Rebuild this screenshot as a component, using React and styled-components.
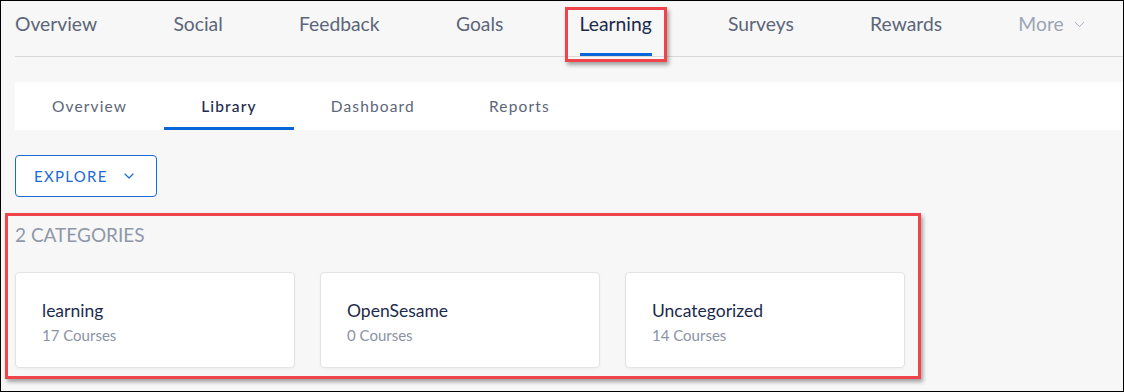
import React from 'react'
import styled, { createGlobalStyle } from 'styled-components';
import { ChevronDown } from 'lucide-react';

const GlobalStyle = createGlobalStyle`
    html, body {
        margin: 0;
        padding: 0;
        background: #f7f7f7;
    }
    * {
        box-sizing: border-box;
    }
`;

const mainTabs = ['Overview', 'Social', 'Feedback', 'Goals', 'Learning', 'Surveys', 'Rewards'];
const subTabs = ['Overview', 'Library', 'Dashboard', 'Reports'];
const categories = [
    { name: 'learning', count: 17 },
    { name: 'OpenSesame', count: 0 },
    { name: 'Uncategorized', count: 14 },
];

function App() {
    return (
        <>
            <GlobalStyle />
            <Frame>
                <TopNav>
                    {mainTabs.map((tab) => (
                        <TopTab key={tab} $active={tab === 'Learning'}>{tab}</TopTab>
                    ))}
                    <TopTab $muted>
                        More <ChevronDown size={17} strokeWidth={1.3} />
                    </TopTab>
                </TopNav>

                <SubNav>
                    {subTabs.map((tab) => (
                        <SubTab key={tab} $active={tab === 'Library'}>{tab}</SubTab>
                    ))}
                </SubNav>

                <ExploreButton>
                    EXPLORE <ChevronDown size={16} strokeWidth={1.8} />
                </ExploreButton>

                <CategoryTitle>2 CATEGORIES</CategoryTitle>
                <CardGrid>
                    {categories.map((c) => (
                        <Card key={c.name}>
                            <h3>{c.name}</h3>
                            <p>{c.count} Courses</p>
                        </Card>
                    ))}
                </CardGrid>

                {/* annotation boxes drawn over the screenshot */}
                <Highlight style={{ left: 564, top: 6, width: 102, height: 55 }} />
                <Highlight style={{ left: 4, top: 212, width: 916, height: 166 }} />
            </Frame>
        </>
    )
}

const Frame = styled.div`
    position: relative;
    width: 1124px;
    height: 392px;
    border: 1px solid #000;
    background: #f7f7f7;
    padding-left: 14px;
    overflow: hidden;
    font-family: Lato, "Open Sans", sans-serif;
`;

const TopNav = styled.nav`
    display: flex;
    gap: 76.3px;
    height: 56px;
    border-bottom: 1px solid #d9d9d9;
`;

const TopTab = styled.div`
    display: flex;
    align-items: flex-start;
    gap: 7px;
    height: 55px;
    padding-top: 11px;
    font-size: 19.3px;
    line-height: 24px;
    color: ${({ $active, $muted }) => ($active ? '#1c2a4d' : $muted ? '#9ba4b6' : '#5c6579')};
    border-bottom: 3px solid ${({ $active }) => ($active ? '#0a66d8' : 'transparent')};
    svg {
        margin-top: 4px;
    }
`;

const SubNav = styled.div`
    display: flex;
    margin-top: 25px;
    height: 48px;
    background: #fff;
`;

const SubTab = styled.div`
    padding: 0 37px;
    height: 48px;
    font-size: 15.5px;
    letter-spacing: 1.15px;
    line-height: 49px;
    font-weight: ${({ $active }) => ($active ? 500 : 400)};
    color: ${({ $active }) => ($active ? '#1c2a4d' : '#5c6579')};
    border-bottom: 3px solid ${({ $active }) => ($active ? '#0a66d8' : 'transparent')};
`;

const ExploreButton = styled.button`
    display: flex;
    align-items: center;
    gap: 13px;
    margin-top: 25px;
    width: 142px;
    height: 42px;
    padding: 0 0 0 18px;
    background: #fff;
    border: 1px solid #1a6ad8;
    border-radius: 4px;
    color: #1a6ad8;
    font-family: Lato, "Open Sans", sans-serif;
    font-size: 15px;
    letter-spacing: 1.3px;
`;

const CategoryTitle = styled.h2`
    margin: 26px 0 0;
    font-size: 19px;
    line-height: 24px;
    font-weight: 400;
    color: #8f97a9;
`;

const CardGrid = styled.div`
    display: grid;
    grid-template-columns: repeat(3, 280px);
    gap: 25px;
    margin-top: 25px;
`;

const Card = styled.div`
    height: 96px;
    padding: 27px 26px 0;
    background: #fff;
    border: 1px solid #e3e3e3;
    border-radius: 4px;
    box-shadow: 0 1px 3px rgba(0, 0, 0, 0.04);
    h3 {
        margin: 0;
        font-size: 17.5px;
        line-height: 22px;
        font-weight: 400;
        color: #1c2a4d;
    }
    p {
        margin: 4px 0 0;
        font-size: 15px;
        line-height: 19px;
        color: #8b93a6;
    }
`;

const Highlight = styled.div`
    position: absolute;
    border: 3px solid #ef4449;
    box-shadow: 2px 3px 4px rgba(0, 0, 0, 0.35);
    pointer-events: none;
`;

export default App;
